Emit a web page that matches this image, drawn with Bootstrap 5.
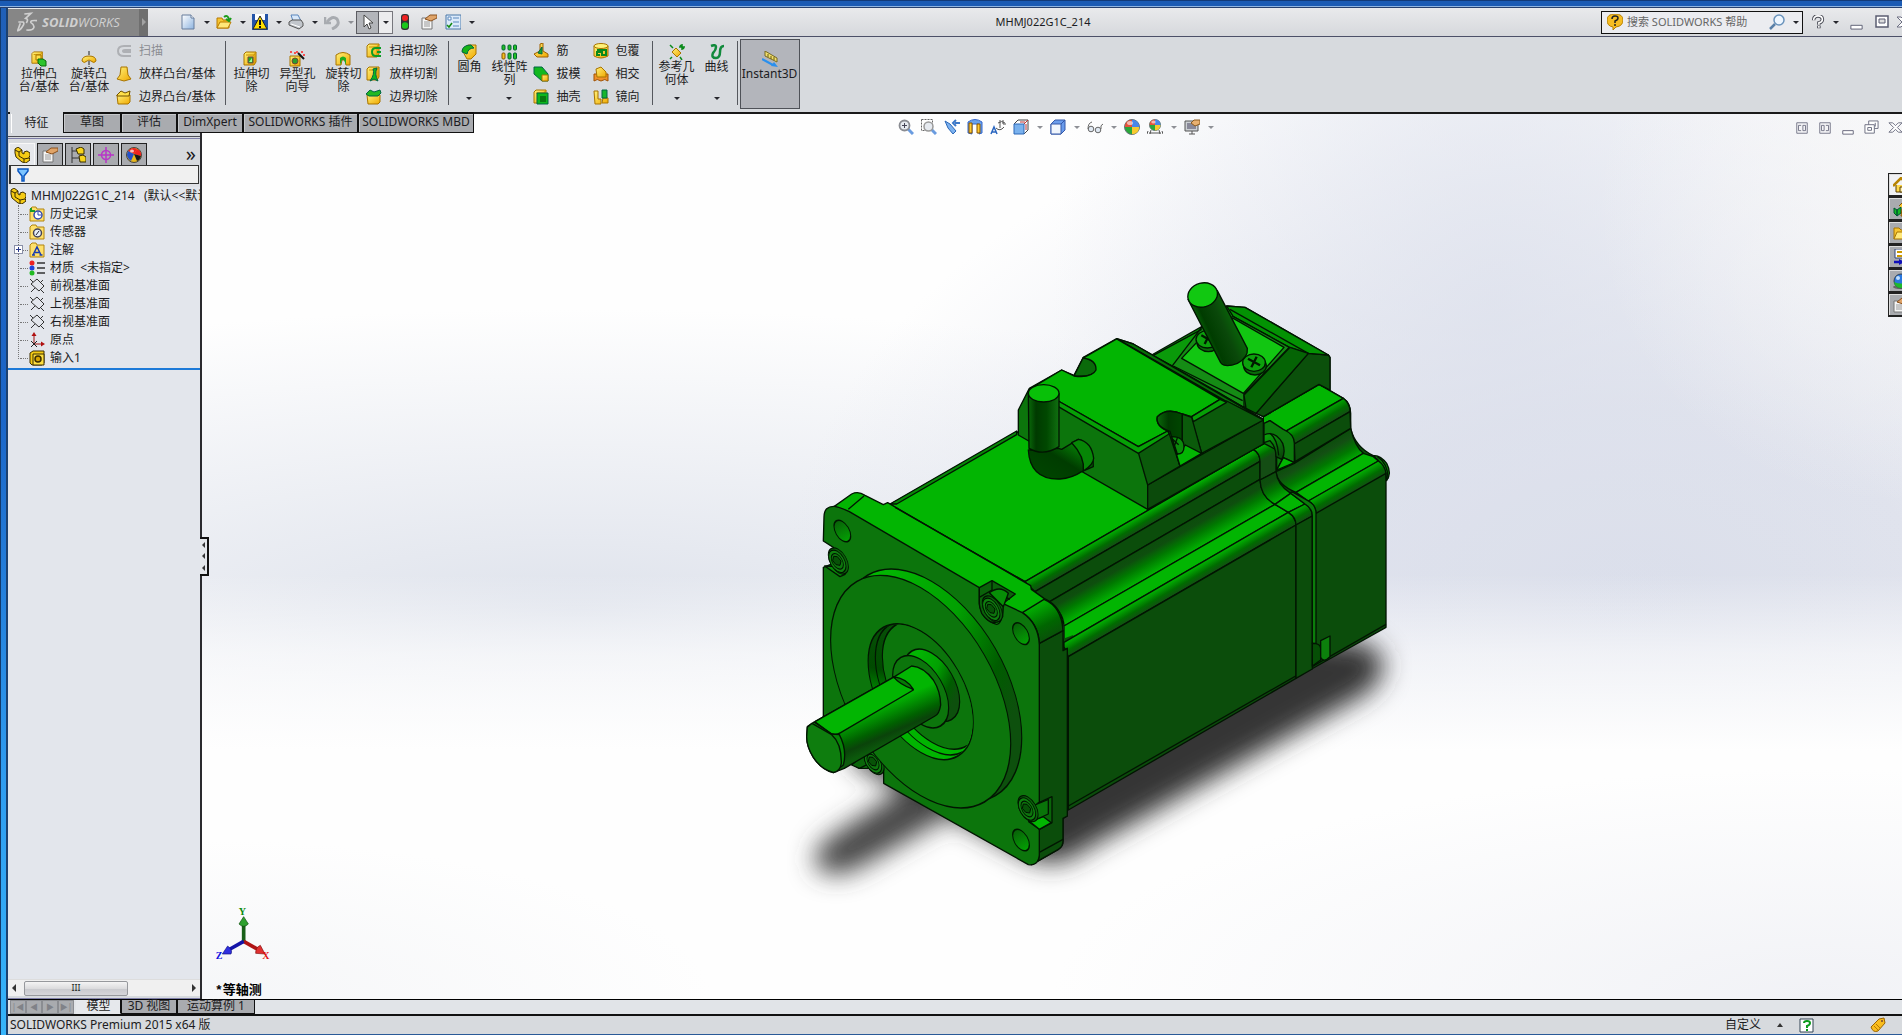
<!DOCTYPE html>
<html lang="zh-CN">
<head>
<meta charset="utf-8">
<meta name="viewport" content="width=device-width, initial-scale=1">
<title>SOLIDWORKS - MHMJ022G1C_214</title>
<link href="https://cdn.jsdelivr.net/npm/bootstrap@5.3.0/dist/css/bootstrap.min.css" rel="stylesheet">
<style>
:root{--ui:#d7dade;--ink:#1c1c22;--line:#111}
html,body{height:100%}
body{font-family:"Noto Sans","Noto Sans CJK SC",sans-serif;font-size:12px;line-height:16px;color:var(--ink);background:var(--ui);overflow:hidden}
button{border:0;background:none;padding:0;color:inherit;font:inherit;line-height:inherit}
svg{display:block;flex:none}
.ico{width:16px;height:16px}
.frame-top{height:8px;background:linear-gradient(#123a78 0 1px,#1b5bb4 1px 6px,#8fb4e0 6px 7px,#27406e 7px)}
.frame-left{width:8px;background:linear-gradient(90deg,#123a6c 0 1px,transparent 1px 6px,#1c4170 6px),linear-gradient(#2060b8,#1b66c8 40%,#2f9cf0 75%,#36b4fa)}
.caret-dn{width:0;height:0;border:3px solid transparent;border-top-color:#26262c;border-bottom:0;flex:none}
.caret-dim{border-top-color:#8e9096}
/* title bar */
.titlebar{height:29px;background:linear-gradient(#e9eaec,#d6d8dc);border-bottom:1px solid #4c5068;white-space:nowrap}
.brand-box{width:131px;height:27px;background:#868686;color:#d0d0d0;font:italic 400 13px/27px "Open Sans",sans-serif;padding-left:9px}
.brand-arrow{width:9px;height:27px;background:#6f6f6f}
.brand-arrow i{border:4px solid transparent;border-left-color:#a2a2a2;border-right:0}
.quick{padding-left:32px}
.quick .tool{width:36px}
.quick .tool-slim{width:32px}
.tool .caret-dn{margin-left:8px}
.pick{width:23px;height:23px;background:#b3b5ba;border:1px solid #5c5c62}
.pick-dd{width:14px;height:23px;background:#ececee;border:1px solid #77777d;border-left:0}
.doc-title{font-size:11px;padding-left:4px}
.search-box{width:202px;height:23px;border:1px solid #111;background:#ebecf0;padding:0 5px}
.search-box input{width:146px;border:0;background:none;font-size:11px;padding:0 4px;color:#555;outline:0}
.search-box input::placeholder{color:#666;opacity:1}
.win-ctl{width:99px;padding-left:8px;gap:6px}
/* ribbon */
.ribbon{height:77px;border-bottom:2px solid #1a1a1a;background:var(--ui);padding-left:6px}
.big{width:46px;line-height:13px;padding-top:14px;text-align:center;justify-content:flex-start}
.big-wide{width:50px}
.big-top{width:40px;padding-top:7px;position:relative}
.big-top .caret-dn{position:absolute;bottom:12px}
.stack{padding-top:2px}
.stack button{height:23px;display:flex;align-items:center;gap:7px}
.stack-a{padding-left:2px;padding-right:10px}
.divide{width:1px;background:#55585e;margin:4px 0 7px}
.instant{width:60px;height:70px;border:1px solid #4f5258;background:#b3b5bb;margin:2px 0 0 2px;padding-top:11px;line-height:13px}
.off{color:#8b8d92}
/* command tabs */
.cmd-tabs{position:absolute;left:2px;top:-2px;z-index:3}
.cmd-tabs button{height:21px;border:1px solid var(--line);border-width:2px 1px 1px;background:#a9abaf;padding:0 0 3px;line-height:15px;box-shadow:inset 1px 1px #c6c8cb}
.cmd-tabs button.active{background:var(--ui);border-color:var(--ui);height:22px;box-shadow:inset 1px 0 #fff}
/* feature manager */
.side{width:194px;padding-top:22px;background:var(--ui);border-right:2px solid #2a2a2e;position:relative;z-index:2}
.side-rule{border-top:1px solid #4e4e56;height:3px;border-bottom:1px solid #7f7fa8;margin-bottom:4px}
.mgr-tabs{height:22px;padding-left:1px}
.mgr-tabs button{width:26px;height:22px;margin-right:2px;background:#a9abaf;border:1px solid #222;border-bottom:0;display:flex;align-items:center;justify-content:center}
.mgr-tabs button.active{background:#e6e8ec;border-color:#f8f8f8}
.filter-box{height:19px;border:1px solid #333;border-width:1px 1px 1px 2px;background:#f0f0f0;margin:0 1px;padding-left:4px}
.filter-box input{border:0;background:none;width:150px;height:15px;outline:0}
.tree{background:#e3e6ec;border-top:3px solid #dfe1e6}
.tree ul{margin:0;padding:0;list-style:none}
.tree .nodes{position:relative;border-bottom:2px solid #1d7ad8;padding-bottom:1px}
.tree .nodes:before{content:"";position:absolute;left:10px;top:0;height:154px;border-left:1px dotted #777}
.tree li{height:18px;white-space:nowrap;overflow:hidden}
.tree .root{padding-left:2px;gap:5px}
.tree .leaf{padding-left:12px;gap:5px}
.tree .leaf:before{content:"";width:8px;border-top:1px dotted #777;margin-right:-4px}
.plus{position:absolute;left:6px;top:40px;width:9px;height:9px;border:1px solid #8a90a8;background:#fff;z-index:1}
.plus:before,.plus:after{content:"";position:absolute;background:#2a3a8a}
.plus:before{left:1px;right:1px;top:3px;height:1px}
.plus:after{top:1px;bottom:1px;left:3px;width:1px}
.hscroll{height:17px;background:#f0f0f0;border-top:1px solid #ddd}
.hscroll .thumb{width:104px;height:15px;border:1px solid #96989c;border-radius:2px;background:linear-gradient(#f4f4f4,#dcdcde 50%,#c8c9cd 52%,#d6d6da);font-size:9px;line-height:11px}
.tri{border:4px solid transparent;width:0;height:0}
.tri-l{border-right-color:#333;border-left:0}
.tri-r{border-left-color:#333;border-right:0}
.grip{position:absolute;right:-9px;top:423px;width:9px;height:39px;background:#e3e6ea;border:1px solid #111;border-width:2px 2px 2px 0}
.grip .tri{border-width:3px;border-left-width:0}
/* graphics area */
.view{position:relative;overflow:hidden;background:
 linear-gradient(to bottom,transparent 52%,rgba(254,254,254,.6) 61%,#fefefe 72%),
 radial-gradient(ellipse 18% 34% at 100% 10%,rgba(246,246,247,.9),transparent),
 radial-gradient(ellipse 26% 80% at 76% 22%,rgba(220,224,236,.7),transparent),
 radial-gradient(ellipse 50% 62% at 84% 55%,#dadeea,#e0e3ed 35%,transparent),
 radial-gradient(ellipse 70% 34% at 22% 56%,#dfe3ec,transparent),#fefefe}
.view:after{content:"";position:absolute;inset:0;background:radial-gradient(ellipse 45% 26% at 95% 100%,#f1f2f6,transparent),radial-gradient(ellipse 30% 18% at 0 100%,#f5f6f8,transparent);z-index:0}
.scene{position:absolute;inset:0;width:100%;height:100%;z-index:1}
.view-bar{position:absolute;z-index:2;top:5px;left:4px;right:-4px;gap:7px}
.doc-ctl{position:absolute;z-index:2;top:6px;right:0;width:107px;gap:9px}
.task-tabs{position:absolute;z-index:2;top:59px;right:0;width:14px}
.task-tabs button{width:14px;height:24px;border:1px solid #222;border-right:0;border-bottom-width:2px;background:#a9abaf;padding-left:4px;overflow:hidden;display:block;box-shadow:inset 1px 1px #ddd}
.task-tabs button.active{background:#f1f2f4}
.triad{position:absolute;left:11px;bottom:36px;z-index:2;width:60px;height:57px}
.orient{position:absolute;left:13px;bottom:0;z-index:2;font:700 13px/16px "Liberation Mono","Noto Sans CJK SC",monospace;color:#000}
/* bottom */
.model-tabs{height:17px;border-top:1px solid #000;border-bottom:2px solid #111;background:#e1e4e8;padding-left:2px}
.model-tabs .step{width:16px;height:14px;background:#a9abaf;border:1px solid #8b8d92;color:#808288;font-size:8px;line-height:12px;text-align:center}
.model-tabs .step:nth-child(4){margin-right:2px}
.model-tabs .sheet{height:14px;line-height:11px;background:#a9abaf;border:1px solid #111;border-top:0;padding-bottom:2px}
.model-tabs .sheet.active{background:#e6e8ec;border-color:#e6e8ec #111 #e6e8ec #e6e8ec}
.status{height:19px;background:var(--ui);border-bottom:1px solid #2a5a98;padding:0 0 0 2px}
</style>
</head>
<body class="d-flex flex-column">
<svg width="0" height="0" class="position-absolute">
<defs>
<linearGradient id="gy" x1="0" y1="0" x2="1" y2="1"><stop offset="0" stop-color="#fff27a"/><stop offset="1" stop-color="#f0a800"/></linearGradient>
<linearGradient id="gb" x1="0" y1="0" x2="1" y2="1"><stop offset="0" stop-color="#fff"/><stop offset="1" stop-color="#8eb4e0"/></linearGradient>
<symbol id="cube" viewBox="0 0 16 16"><path d="M1 3 3 1h10v10l-2 3H1z" fill="url(#gy)" stroke="#a87400"/><path d="M3 4h8v9M11 4l2-3" fill="none" stroke="#c89000"/></symbol>
<symbol id="i-ext" viewBox="0 0 16 16"><use href="#cube" width="14" height="14"/><path d="M5 4h5v5H5z" fill="#ffe04a" stroke="#a87400"/><path d="M7 8h5l3 2v5h-5l-3-3z" fill="#2cc42c" stroke="#0a6a0a"/></symbol>
<symbol id="i-rev" viewBox="0 0 16 16"><path d="M8 0v16" stroke="#222" stroke-dasharray="4 1"/><path d="M1 10Q1 5 8 5t7 5q-2 3-5 0-2-2-4 0-3 3-5 0z" fill="url(#gy)" stroke="#a87400"/></symbol>
<symbol id="i-sweepg" viewBox="0 0 16 16"><path d="M15 3H8Q2 3 2 8t6 5h7M15 7H9Q7 7 7 8t2 1h6" fill="none" stroke="#aeb0b4" stroke-width="2"/></symbol>
<symbol id="i-loft" viewBox="0 0 16 16"><path d="M5 1h6l1 8 3 4-7 2-7-2 3-4z" fill="url(#gy)" stroke="#a87400"/></symbol>
<symbol id="i-bound" viewBox="0 0 16 16"><path d="M1 6h13v7l-2 2H2z" fill="url(#gy)" stroke="#a87400"/><path d="M1 6l4-4 4 2 5-2-1 5-12 0z" fill="#ffe04a" stroke="#705000"/></symbol>
<symbol id="i-boundg" viewBox="0 0 16 16"><path d="M1 6h13v7l-2 2H2z" fill="url(#gy)" stroke="#a87400"/><path d="M0 5l4-4 4 2 6-2 1 3-3 3H3z" fill="#22b822" stroke="#064"/></symbol>
<symbol id="i-cut" viewBox="0 0 16 16"><use href="#cube" width="16" height="16"/><path d="M5 6h5v6H5z" fill="#22a822" stroke="#744"/><path d="M6 11l3-4v4z" fill="#9f9"/></symbol>
<symbol id="i-hole" viewBox="0 0 16 16"><path d="M1 5h10v10H1z" fill="url(#gy)" stroke="#a87400"/><circle cx="6" cy="10" r="3" fill="#2c9c2c" stroke="#743"/><path d="M9 2l6 6" stroke="#111" stroke-width="2"/><path d="M1 1h2M5 2h2M8 0v2M12 1h2M14 4h2" stroke="#f22" stroke-width="1.5"/></symbol>
<symbol id="i-revc" viewBox="0 0 16 16"><path d="M1 4q7-5 14 0v10h-4l-1-5H7l-1 5H1z" fill="url(#gy)" stroke="#a87400"/><path d="M5 14V7q3-3 6 0v7l-2-5H7z" fill="#1eae1e"/></symbol>
<symbol id="i-sweepc" viewBox="0 0 16 16"><use href="#cube" width="16" height="16"/><path d="M15 5H10q-4 0-4 4t4 4h5M15 9h-4" fill="none" stroke="#0c9c24" stroke-width="2"/></symbol>
<symbol id="i-loftc" viewBox="0 0 16 16"><use href="#cube" width="16" height="16"/><path d="M7 3q2 5-3 12l4-2 4 2Q8 8 11 2z" fill="#0cba1c" stroke="#064"/></symbol>
<symbol id="i-fillet" viewBox="0 0 16 16"><path d="M1 6l6-5h8v9l-5 5H6z" fill="url(#gy)" stroke="#a87400"/><path d="M1 8Q1 1 10 1l3 3q-6 0-7 6z" fill="#17b517" stroke="#064"/></symbol>
<symbol id="i-pat" viewBox="0 0 16 16"><g fill="#22c022" stroke="#063"><rect x="1" y="1" width="3" height="5" rx="1"/><rect x="7" y="1" width="3" height="5" rx="1"/><rect x="12.500" y="1" width="3" height="5" rx="1"/><rect x="1" y="9" width="3" height="6" rx="1" fill="#f3c020" stroke="#850"/><rect x="7" y="9" width="3" height="6" rx="1"/><rect x="12.500" y="9" width="3" height="6" rx="1"/></g></symbol>
<symbol id="i-rib" viewBox="0 0 16 16"><path d="M1 11l6-3V1l3-1v8l5 3v3H4z" fill="url(#gy)" stroke="#a06000"/><path d="M5 10l4-6v7z" fill="#1aae2a" stroke="#064"/></symbol>
<symbol id="i-draft" viewBox="0 0 16 16"><path d="M1 1l8 0 6 7v7H9L1 8z" fill="#12b81f" stroke="#064"/><path d="M9 9h6v6H9z" fill="url(#gy)" stroke="#a87400"/></symbol>
<symbol id="i-shell" viewBox="0 0 16 16"><use href="#cube" width="16" height="16"/><path d="M4 4h11v11H4z" fill="#0cb81c" stroke="#064"/><path d="M7 7h6v6H7z" fill="#087a12"/></symbol>
<symbol id="i-wrap" viewBox="0 0 16 16"><path d="M1 3v10q7 4 14 0V3" fill="url(#gy)" stroke="#a87400"/><ellipse cx="8" cy="3" rx="7" ry="2.500" fill="#fff27a" stroke="#a87400"/><path d="M4 7h3v2H4v3h3M9 7h4v5H9z" fill="none" stroke="#0a8a1a" stroke-width="2"/></symbol>
<symbol id="i-inter" viewBox="0 0 16 16"><path d="M1 8h14v7q-3-3-7 0-4-3-7 0z" fill="#f0902a" stroke="#a05000"/><path d="M3 3l5-2 5 5v5H4z" fill="url(#gy)" stroke="#a87400"/></symbol>
<symbol id="i-mir" viewBox="0 0 16 16"><path d="M1 2h4v8h3v5H2zM10 9h5v5H9z" fill="url(#gy)" stroke="#a87400"/><path d="M9 1h5v8H9z" fill="#17b52c" stroke="#064"/></symbol>
<symbol id="i-ref" viewBox="0 0 16 16"><path d="M7 4l5 5-4 4-5-5z" fill="url(#gy)" stroke="#a87400"/><path d="M1 1l3 3M10 3h6M13 0v6M11 1l4 4M11 13l2 3M3 13l-2 2" stroke="#0a8a1a" stroke-width="1.500"/></symbol>
<symbol id="i-curve" viewBox="0 0 16 16"><path d="M2 2q5-2 5 1T4 9q-2 5 3 5 4 0 4-6t4-6" fill="none" stroke="#128a3c" stroke-width="2.500"/></symbol>
<symbol id="i-3d" viewBox="0 0 16 16"><path d="M3 0l12 7v4L3 5z" fill="#f1de6c" stroke="#776a20"/><path d="M6 3v3M9 5v3M12 6v3" stroke="#665a10"/><path d="M0 8l11 6" stroke="#2a90ee" stroke-width="2"/><path d="M16 16l-7-1 3-4z" fill="#2a90ee"/></symbol>
<symbol id="i-new" viewBox="0 0 16 16"><path d="M2 1h9l3 3v11H2z" fill="url(#gb)" stroke="#667c9c"/><path d="M11 1v3h3" fill="#fff" stroke="#667c9c"/></symbol>
<symbol id="i-open" viewBox="0 0 16 16"><path d="M1 14V4h5l1 2h6v8z" fill="#f7c531" stroke="#b87a00"/><path d="M1 14l3-6h11l-3 6z" fill="#ffe87a" stroke="#b87a00"/><path d="M8 3q4-3 5 3M10 5l3 2 2-3" fill="none" stroke="#1a9c1a" stroke-width="2"/></symbol>
<symbol id="i-save" viewBox="0 0 16 16"><path d="M0 0h16v16H0z" fill="#2454a8"/><path d="M3 0h10v6H3z" fill="#fff"/><path d="M8 2l7 13H1z" fill="#ffe000" stroke="#222"/><path d="M8 6v5M8 12v2" stroke="#111" stroke-width="2"/></symbol>
<symbol id="i-print" viewBox="0 0 16 16"><path d="M3 1h7l3 6H5z" fill="#d8e8fa" stroke="#5a86bc"/><path d="M1 8l3-2h9l2 3v3l-4 3-10-4z" fill="#c2c6cc" stroke="#555"/><path d="M3 10l9 3" stroke="#fff"/></symbol>
<symbol id="i-undo" viewBox="0 0 16 16"><path d="M1 3v6h6" fill="none" stroke="#a8abb0" stroke-width="2.500"/><path d="M3 8q5-7 10-3 4 6-5 10" fill="none" stroke="#a8abb0" stroke-width="3"/></symbol>
<symbol id="i-arrow" viewBox="0 0 16 16"><path d="M4 1v12l3-3 2 5 2-1-2-5h4z" fill="#fff" stroke="#444"/></symbol>
<symbol id="i-light" viewBox="0 0 16 16"><rect x="4" y="0" width="8" height="16" rx="3" fill="#333"/><circle cx="8" cy="4" r="3" fill="#e22"/><circle cx="8" cy="11.500" r="3.200" fill="#1bc81b"/></symbol>
<symbol id="i-prop" viewBox="0 0 16 16"><path d="M1 4h10v11H1z" fill="#f5f5f5" stroke="#777"/><path d="M3 8h6M3 10h6M3 12h6" stroke="#999"/><path d="M4 5l5-4h7v3l-6 3-3-1z" fill="#e0a468" stroke="#8a5220"/></symbol>
<symbol id="i-opt" viewBox="0 0 16 16"><path d="M1 1h15v14H1z" fill="#dceafa" stroke="#4a78a8"/><path d="M3 3h3v3H3zM8 4h6M8 8h6M8 12h6" fill="#fff" stroke="#5a88bc"/><path d="M2 11l2 2 3-4" fill="none" stroke="#128a12" stroke-width="1.500"/></symbol>
<symbol id="i-tip" viewBox="0 0 16 16"><path d="M8 0q8 0 8 6t-7 7l-3 3v-3Q0 12 0 6t8-6z" fill="#f6bd22" stroke="#b88000"/><path d="M5 5q0-3 3-3t3 2q0 2-3 3v2M8 10v2" fill="none" stroke="#222" stroke-width="1.500"/></symbol>
<symbol id="i-find" viewBox="0 0 16 16"><path d="M1 15l5-5" stroke="#5a80a8" stroke-width="2.500"/><circle cx="10" cy="6" r="5" fill="#eef6ff" stroke="#6a93bc" stroke-width="1.500"/></symbol>
<symbol id="i-help" viewBox="0 0 16 16"><path d="M3 6q0-5 5-5t5 4q0 3-4 4v2M9 12v3" fill="none" stroke="#4c4e58" stroke-width="4"/><path d="M3 6q0-5 5-5t5 4q0 3-4 4v2M9 12.500v2" fill="none" stroke="#fff" stroke-width="1.800"/></symbol>
<symbol id="i-min" viewBox="0 0 16 16"><path d="M2 11h12v4H2z" fill="#fff" stroke="#5b5d72"/></symbol>
<symbol id="i-max" viewBox="0 0 16 16"><path d="M2 2h12v11H2z" fill="#fff" stroke="#5b5d72" stroke-width="1.500"/><path d="M5 5h6v4H5z" fill="#ddd" stroke="#5b5d72"/></symbol>
<symbol id="i-x" viewBox="0 0 16 16"><path d="M1 3h4l3 3 3-3h4l-5 5 5 5h-4l-3-3-3 3H1l5-5z" fill="#fff" stroke="#6b6d80"/></symbol>
<symbol id="i-part" viewBox="0 0 16 16"><path d="M1 2l3-2 4 3v3l2 1V5l3-1 3 2v3l-1 1 1 3-4 3-4-1-6-5-1-4z" fill="#f5cb14" stroke="#3c2e00"/><path d="M1 3l4 2v4l5 3 5-1M5 5l3-2M10 12v3" fill="none" stroke="#3c2e00"/></symbol>
<symbol id="i-conf" viewBox="0 0 16 16"><path d="M2 0v16M2 4h5M2 11h7" stroke="#333"/><path d="M6 2l5-2 3 2v5H8zM9 9l4-1 3 2v5h-6z" fill="#f7d41c" stroke="#332a00"/></symbol>
<symbol id="i-dim" viewBox="0 0 16 16"><g fill="none" stroke="#b836c8" stroke-width="1.500"><circle cx="8" cy="8" r="4.500"/><path d="M8 0v16M0 8h16"/></g></symbol>
<symbol id="i-ball" viewBox="0 0 16 16"><circle cx="8" cy="8" r="7.500" fill="#e8b81c" stroke="#444"/><path d="M8 7L2 4Q6-1 11 2z" fill="#e22"/><path d="M8 7l3-5q5 2 4 7z" fill="#e22"/><path d="M8 7L2 4Q-1 10 5 14z" fill="#2450c8"/><path d="M8 7l7 2q-1 4-4 5z" fill="#17181c"/><ellipse cx="6" cy="4" rx="2" ry="1.500" fill="#fff" opacity=".7"/></symbol>
<symbol id="i-ball2" viewBox="0 0 16 16"><circle cx="8" cy="8" r="7.500" fill="#2aa83a" stroke="#68707c"/><path d="M8 8V.8Q15 1 15.200 8z" fill="#4a86ea"/><path d="M8 8h7.200Q15 15 8 15.200z" fill="#f8ca30"/><path d="M8 8V.8Q1 1 .8 8z" fill="#e6533c"/><ellipse cx="6" cy="4" rx="3" ry="2" fill="#fff" opacity=".6"/></symbol>
<symbol id="i-globe" viewBox="0 0 16 16"><ellipse cx="8" cy="14" rx="8" ry="2" fill="#666"/><circle cx="8" cy="8" r="7" fill="#2a78e0" stroke="#345"/><path d="M1 9q7 3 14 0-1 6-7 6T1 9z" fill="#1fb82a"/><circle cx="5" cy="5" r="2" fill="#bfe0ff"/></symbol>
<symbol id="i-scene" viewBox="0 0 16 16"><use href="#i-ball2" x="2" width="12" height="12"/><path d="M1 12l-1 3M4 11l-1 4M12 11l1 4M15 12l1 3M2 14h12" stroke="#555"/></symbol>
<symbol id="i-funnel" viewBox="0 0 16 16"><path d="M3 2h10v2L9 9v5H7V9L3 4z" fill="#7cc4ff" stroke="#0a55c0" stroke-width="1.500"/></symbol>
<symbol id="folder" viewBox="0 0 16 16"><path d="M1 15V3l2-2h4l1 2h7v12z" fill="#ffe06a" stroke="#b08410"/></symbol>
<symbol id="i-hist" viewBox="0 0 16 16"><use href="#folder" width="16" height="16"/><circle cx="9" cy="9" r="4" fill="#fff" stroke="#3048b0" stroke-width="1.500"/><path d="M9 6v3h3" fill="none" stroke="#3048b0"/><path d="M2 2v3h4" fill="none" stroke="#1a9a2a" stroke-width="2"/></symbol>
<symbol id="i-sens" viewBox="0 0 16 16"><use href="#folder" width="16" height="16"/><circle cx="8.500" cy="9" r="4" fill="#e8f0f8" stroke="#445" stroke-width="1.500"/><path d="M7 11l3-4" stroke="#223"/></symbol>
<symbol id="i-note" viewBox="0 0 16 16"><use href="#folder" width="16" height="16"/><path d="M4 13L8 5l4 8M5 10.500h5.500M3 13h3M10.500 13h3" fill="none" stroke="#1a3cb0" stroke-width="1.500"/></symbol>
<symbol id="i-mat" viewBox="0 0 16 16"><circle cx="3" cy="3" r="2.500" fill="#e22"/><circle cx="3" cy="8" r="2.500" fill="#24d"/><circle cx="3" cy="13" r="2.500" fill="#2b2"/><path d="M8 3h8M8 8h8M8 13h8" stroke="#333" stroke-width="1.500"/></symbol>
<symbol id="i-plane" viewBox="0 0 16 16"><path d="M1 1l14 14M14 2L2 14" fill="none" stroke="#333"/><path d="M8 1l7 7-5 5-8-7z" fill="#e3e6ec" stroke="#333"/></symbol>
<symbol id="i-orig" viewBox="0 0 16 16"><path d="M5 12V2M5 12h9" stroke="#a01010"/><path d="M2.500 4L5 0l2.500 4zM12 9.500l4 2.500-4 2.500z" fill="#b01010"/><path d="M2 9l6 6M8 9l-6 6" stroke="#222"/></symbol>
<symbol id="i-imp" viewBox="0 0 16 16"><path d="M1 3l3-2h11v12l-2 2H3l-2-2z" fill="#f5cb14" stroke="#3c2e00"/><path d="M4 4h11v11H4z" fill="#ffe040" stroke="#3c2e00"/><circle cx="9" cy="9" r="3" fill="#d8a400" stroke="#3c2e00" stroke-width="1.500"/></symbol>
<symbol id="i-zoom" viewBox="0 0 16 16"><path d="M10 10l5 5" stroke="#6a9ce0" stroke-width="3"/><circle cx="6.500" cy="6.500" r="5" fill="#e6eaf0" stroke="#8a8c92" stroke-width="1.800"/><path d="M6.500 4v5M4 6.500h5" stroke="#445"/></symbol>
<symbol id="i-zooma" viewBox="0 0 16 16"><path d="M.5.500h11v11h-11z" fill="none" stroke="#666" stroke-dasharray="2 1"/><path d="M10 10l5 5" stroke="#6a9ce0" stroke-width="3"/><circle cx="7.500" cy="7.500" r="4.500" fill="#e6eaf0" stroke="#999" stroke-width="1.500"/></symbol>
<symbol id="i-prev" viewBox="0 0 16 16"><path d="M1 2l5 3 6 7-3 3-5-6z" fill="#7cb2f0" stroke="#2c68b8"/><path d="M16 4h-5M12 1L9 4l3 3" fill="none" stroke="#3c78c8" stroke-width="2"/></symbol>
<symbol id="i-sec" viewBox="0 0 16 16"><path d="M1 3q7-5 14 0v11l-3 1V5H5v10l-4-1z" fill="#6aa2ea" stroke="#36c"/><path d="M2 4h3v10H2zM10 5h3v9h-3z" fill="#fc3" stroke="#850"/></symbol>
<symbol id="i-ori" viewBox="0 0 16 16"><path d="M1 15L4 8l3 7M2 13h4" fill="none" stroke="#2a66c0" stroke-width="1.500"/><path d="M8 4q4-3 7 0M13 1v4h3M6 9q4 4 8-1M10 1v8" fill="none" stroke="#555"/></symbol>
<symbol id="i-vori" viewBox="0 0 16 16"><path d="M5 1h10v10l-4 4M1 5l4-4" fill="#fff" stroke="#444"/><path d="M1 5h10v10H1z" fill="#7ab2ee" stroke="#2c68b8"/><path d="M11 5l4-4M13 5v6M7 3h5" stroke="#b33"/></symbol>
<symbol id="i-disp" viewBox="0 0 16 16"><path d="M1 5l4-4h10v10l-4 4H1z" fill="#6a9cec" stroke="#3458a8"/><path d="M1 5h10v10H1z" fill="#f0f5fc" stroke="#3458a8"/><path d="M11 5l4-4" stroke="#3458a8"/></symbol>
<symbol id="i-glass" viewBox="0 0 16 16"><circle cx="4" cy="10" r="2.800" fill="#dfe8f2" stroke="#666"/><circle cx="11" cy="11" r="2.800" fill="#dfe8f2" stroke="#666"/><path d="M1 10Q1 4 5 3M14 10q-1-4 2-5" fill="none" stroke="#666"/></symbol>
<symbol id="i-vset" viewBox="0 0 16 16"><path d="M1 2h13v10H1zM5 15h6M8 12v3" fill="#ccd0d4" stroke="#555"/><path d="M3 4h9v6H3z" fill="#889"/><path d="M7 4l3-3h6v4l-5 2z" fill="#e8b070" stroke="#8a5a20"/></symbol>
<symbol id="i-pl" viewBox="0 0 16 16"><path d="M2 2h12v12H2z" fill="#f4f4f6" stroke="#6b6d80"/><path d="M9 5h3v6H9zM4 5v6M4 5h3M4 11h3" fill="none" stroke="#6b6d80"/></symbol>
<symbol id="i-pr" viewBox="0 0 16 16"><path d="M2 2h12v12H2z" fill="#f4f4f6" stroke="#6b6d80"/><path d="M4 5h3v6H4zM12 5v6M12 5H9M12 11H9" fill="none" stroke="#6b6d80"/></symbol>
<symbol id="i-rest" viewBox="0 0 16 16"><path d="M5 1h10v8H5z" fill="#fff" stroke="#6b6d80"/><path d="M1 5h10v9H1z" fill="#fff" stroke="#6b6d80"/><path d="M4 8h4v3H4zM12 3v4" fill="none" stroke="#6b6d80"/></symbol>
<symbol id="i-home" viewBox="0 0 16 16"><path d="M3 8v7h11V8" fill="#ffd94a" stroke="#5a3e00"/><path d="M0 9l8-8 8 8" fill="none" stroke="#b88400" stroke-width="2.500"/><path d="M7 10h4v5H7z" fill="#fff3b0" stroke="#5a3e00"/></symbol>
<symbol id="i-lib" viewBox="0 0 16 16"><path d="M1 7l3 2v6l-3-3zM4 9l4-3v6l-4 3z" fill="#16b826" stroke="#053"/><path d="M6 5l4-4v6M9 8h6v7H8z" fill="#fc3" stroke="#850"/></symbol>
<symbol id="i-fold" viewBox="0 0 16 16"><path d="M1 14V3h5l2 2h7" fill="#f7c531" stroke="#a87400"/><path d="M1 14l3-7h12l-2 7z" fill="#ffe87a" stroke="#a87400"/></symbol>
<symbol id="i-pal" viewBox="0 0 16 16"><path d="M2 0h14v9H2z" fill="#fff" stroke="#347"/><path d="M4 3h8M4 7h8" stroke="#c90" stroke-width="2"/><path d="M1 13h8" stroke="#11b" stroke-width="2.500"/><path d="M6 10l5 3-5 3z" fill="#11b"/></symbol>
<symbol id="i-tag" viewBox="0 0 16 16"><path d="M1 10l8-8 5-1 1 5-7 8q-5 2-7-4z" fill="#f9bd1e" stroke="#9a6400"/><circle cx="12" cy="4" r="1" fill="#743"/><path d="M4 9l4 4M6 7l4 4" stroke="#b87a00"/></symbol>
</defs>
</svg>

<div class="frame-top flex-shrink-0"></div>
<div class="d-flex flex-grow-1 overflow-hidden">
<div class="frame-left flex-shrink-0"></div>
<div class="d-flex flex-column flex-grow-1 overflow-hidden">

<header class="titlebar d-flex align-items-center flex-shrink-0">
  <div class="brand-box d-flex align-items-center">
    <svg width="21" height="20" viewBox="0 0 63 60" class="me-1" fill="none" stroke="#d0d0d0" stroke-width="5"><path d="M22 6l20-2-16 15q10 2 2 14M4 30h14q6 4-2 14Q8 56 2 56l8-22M60 26q-22-2-18 6 12 8 8 16-4 8-22 6"/></svg>
    <span><b>SOLID</b>WORKS</span>
  </div>
  <button class="brand-arrow d-flex align-items-center justify-content-center" aria-label="菜单"><i></i></button>
  <div class="quick d-flex align-items-center">
    <button class="tool d-flex align-items-center" aria-label="新建"><svg class="ico"><use href="#i-new"/></svg><i class="caret-dn"></i></button>
    <button class="tool d-flex align-items-center" aria-label="打开"><svg class="ico"><use href="#i-open"/></svg><i class="caret-dn"></i></button>
    <button class="tool d-flex align-items-center" aria-label="保存"><svg class="ico"><use href="#i-save"/></svg><i class="caret-dn"></i></button>
    <button class="tool d-flex align-items-center" aria-label="打印"><svg class="ico"><use href="#i-print"/></svg><i class="caret-dn"></i></button>
    <button class="tool tool-slim d-flex align-items-center" aria-label="撤销"><svg class="ico"><use href="#i-undo"/></svg><i class="caret-dn caret-dim"></i></button>
    <button class="pick d-flex align-items-center justify-content-center" aria-label="选择"><svg class="ico"><use href="#i-arrow"/></svg></button>
    <button class="pick-dd d-flex align-items-center justify-content-center" aria-label="选择选项"><i class="caret-dn"></i></button>
    <button class="ms-1" aria-label="重建"><svg class="ico"><use href="#i-light"/></svg></button>
    <button class="ms-2" aria-label="文件属性"><svg class="ico"><use href="#i-prop"/></svg></button>
    <button class="tool d-flex align-items-center ms-2" aria-label="选项"><svg class="ico"><use href="#i-opt"/></svg><i class="caret-dn"></i></button>
  </div>
  <div class="doc-title flex-grow-1 text-center">MHMJ022G1C_214</div>
  <div class="search-box d-flex align-items-center flex-shrink-0">
    <svg class="ico"><use href="#i-tip"/></svg>
    <input type="text" placeholder="搜索 SOLIDWORKS 帮助" aria-label="搜索 SOLIDWORKS 帮助">
    <svg class="ico"><use href="#i-find"/></svg><i class="caret-dn ms-2"></i>
  </div>
  <div class="win-ctl d-flex align-items-center flex-shrink-0 overflow-hidden">
    <button class="d-flex align-items-center flex-shrink-0" aria-label="帮助"><svg width="14" height="14"><use href="#i-help"/></svg><i class="caret-dn ms-2 me-1"></i></button>
    <button class="flex-shrink-0" aria-label="最小化"><svg width="15" height="15"><use href="#i-min"/></svg></button>
    <button class="flex-shrink-0 ms-1" aria-label="最大化"><svg width="16" height="16"><use href="#i-max"/></svg></button>
    <button class="flex-shrink-0" aria-label="关闭"><svg class="ico"><use href="#i-x"/></svg></button>
  </div>
</header>

<section class="ribbon d-flex flex-shrink-0" aria-label="特征工具">
  <button class="big big-wide d-flex flex-column align-items-center"><svg class="ico"><use href="#i-ext"/></svg><span>拉伸凸<br>台/基体</span></button>
  <button class="big big-wide d-flex flex-column align-items-center"><svg class="ico"><use href="#i-rev"/></svg><span>旋转凸<br>台/基体</span></button>
  <div class="stack stack-a">
    <button class="off" disabled><svg class="ico"><use href="#i-sweepg"/></svg>扫描</button>
    <button><svg class="ico"><use href="#i-loft"/></svg>放样凸台/基体</button>
    <button><svg class="ico"><use href="#i-bound"/></svg>边界凸台/基体</button>
  </div>
  <div class="divide"></div>
  <button class="big d-flex flex-column align-items-center" style="margin-left:2px"><svg class="ico"><use href="#i-cut"/></svg><span>拉伸切<br>除</span></button>
  <button class="big d-flex flex-column align-items-center"><svg class="ico"><use href="#i-hole"/></svg><span>异型孔<br>向导</span></button>
  <button class="big d-flex flex-column align-items-center"><svg class="ico"><use href="#i-revc"/></svg><span>旋转切<br>除</span></button>
  <div class="stack stack-b" style="padding-right:11px">
    <button><svg class="ico"><use href="#i-sweepc"/></svg>扫描切除</button>
    <button><svg class="ico"><use href="#i-loftc"/></svg>放样切割</button>
    <button><svg class="ico"><use href="#i-boundg"/></svg>边界切除</button>
  </div>
  <div class="divide"></div>
  <button class="big big-top d-flex flex-column align-items-center"><svg class="ico"><use href="#i-fillet"/></svg><span>圆角</span><i class="caret-dn"></i></button>
  <button class="big big-top d-flex flex-column align-items-center"><svg class="ico"><use href="#i-pat"/></svg><span>线性阵<br>列</span><i class="caret-dn"></i></button>
  <div class="stack ps-1 pe-2">
    <button><svg class="ico"><use href="#i-rib"/></svg>筋</button>
    <button><svg class="ico"><use href="#i-draft"/></svg>拔模</button>
    <button><svg class="ico"><use href="#i-shell"/></svg>抽壳</button>
  </div>
  <div class="stack ps-1 pe-2 me-1">
    <button><svg class="ico"><use href="#i-wrap"/></svg>包覆</button>
    <button><svg class="ico"><use href="#i-inter"/></svg>相交</button>
    <button><svg class="ico"><use href="#i-mir"/></svg>镜向</button>
  </div>
  <div class="divide"></div>
  <button class="big big-top d-flex flex-column align-items-center ms-1"><svg class="ico"><use href="#i-ref"/></svg><span>参考几<br>何体</span><i class="caret-dn"></i></button>
  <button class="big big-top d-flex flex-column align-items-center"><svg class="ico"><use href="#i-curve"/></svg><span>曲线</span><i class="caret-dn"></i></button>
  <div class="divide"></div>
  <button class="instant d-flex flex-column align-items-center"><svg class="ico"><use href="#i-3d"/></svg>Instant3D</button>
</section>

<main class="d-flex flex-grow-1 position-relative" style="min-height:0">
  <nav class="cmd-tabs d-flex" aria-label="命令管理器">
    <button class="active" style="width:53px">特征</button><button style="width:58px">草图</button><button style="width:56px">评估</button><button style="width:66px">DimXpert</button><button style="width:115px">SOLIDWORKS 插件</button><button style="width:116px">SOLIDWORKS MBD</button>
  </nav>
  <aside class="side d-flex flex-column flex-shrink-0">
    <div class="side-rule flex-shrink-0"></div>
    <div class="mgr-tabs d-flex align-items-center flex-shrink-0">
      <button class="active" aria-label="特征树"><svg class="ico"><use href="#i-part"/></svg></button>
      <button aria-label="属性"><svg class="ico"><use href="#i-prop"/></svg></button>
      <button aria-label="配置"><svg class="ico"><use href="#i-conf"/></svg></button>
      <button aria-label="尺寸专家"><svg class="ico"><use href="#i-dim"/></svg></button>
      <button aria-label="外观"><svg class="ico"><use href="#i-ball"/></svg></button>
      <span class="ms-auto me-1 fs-5 lh-1">»</span>
    </div>
    <div class="filter-box d-flex align-items-center flex-shrink-0"><svg class="ico"><use href="#i-funnel"/></svg><input type="text" aria-label="过滤"></div>
    <div class="tree flex-grow-1 overflow-hidden">
      <ul>
        <li class="root d-flex align-items-center"><svg class="ico"><use href="#i-part"/></svg><span>MHMJ022G1C_214&nbsp;&nbsp; (默认&lt;&lt;默认&gt;_显示状态 1&gt;)</span></li>
      </ul>
      <ul class="nodes">
        <li class="leaf d-flex align-items-center"><svg class="ico"><use href="#i-hist"/></svg>历史记录</li>
        <li class="leaf d-flex align-items-center"><svg class="ico"><use href="#i-sens"/></svg>传感器</li>
        <li class="leaf d-flex align-items-center"><i class="plus"></i><svg class="ico"><use href="#i-note"/></svg>注解</li>
        <li class="leaf d-flex align-items-center"><svg class="ico"><use href="#i-mat"/></svg>材质&nbsp; &lt;未指定&gt;</li>
        <li class="leaf d-flex align-items-center"><svg class="ico"><use href="#i-plane"/></svg>前视基准面</li>
        <li class="leaf d-flex align-items-center"><svg class="ico"><use href="#i-plane"/></svg>上视基准面</li>
        <li class="leaf d-flex align-items-center"><svg class="ico"><use href="#i-plane"/></svg>右视基准面</li>
        <li class="leaf d-flex align-items-center"><svg class="ico"><use href="#i-orig"/></svg>原点</li>
        <li class="leaf d-flex align-items-center"><svg class="ico"><use href="#i-imp"/></svg>输入1</li>
      </ul>
    </div>
    <div class="hscroll d-flex align-items-center flex-shrink-0 px-1">
      <i class="tri tri-l"></i><div class="thumb text-center ms-2">III</div><i class="tri tri-r ms-auto"></i>
    </div>
    <div class="side-rule flex-shrink-0 mb-0 border-top-0"></div>
    <div class="grip d-flex flex-column align-items-center justify-content-around"><i class="tri tri-l"></i><i class="tri tri-l"></i><i class="tri tri-l"></i></div>
  </aside>

  <section class="view flex-grow-1" aria-label="图形区域">
    <svg class="scene" viewBox="202 114 1700 885" preserveAspectRatio="xMidYMid meet">
      <defs>
        <filter id="soft" x="-20%" y="-20%" width="140%" height="140%"><feGaussianBlur stdDeviation="38"/></filter>
        <linearGradient id="cove" gradientUnits="userSpaceOnUse" x1="300" y1="356" x2="343" y2="431"><stop offset="0" stop-color="#0b4d0b"/><stop offset=".25" stop-color="#0e4e0e"/><stop offset=".55" stop-color="#007800"/><stop offset="1" stop-color="#02b502"/></linearGradient>
        <linearGradient id="cove2" gradientUnits="userSpaceOnUse" x1="840" y1="50" x2="885" y2="128"><stop offset="0" stop-color="#0b4d0b"/><stop offset=".25" stop-color="#134f13"/><stop offset=".6" stop-color="#007800"/><stop offset="1" stop-color="#02b502"/></linearGradient>
        <linearGradient id="roll" gradientUnits="userSpaceOnUse" x1="300" y1="505" x2="322" y2="543"><stop offset="0" stop-color="#02b502"/><stop offset=".6" stop-color="#006c00"/><stop offset="1" stop-color="#144d14"/></linearGradient>
        <linearGradient id="roll1" gradientUnits="userSpaceOnUse" x1="300" y1="255" x2="320" y2="290"><stop offset="0" stop-color="#02b502"/><stop offset=".6" stop-color="#006c00"/><stop offset="1" stop-color="#144d14"/></linearGradient>
        <linearGradient id="roll3" gradientUnits="userSpaceOnUse" x1="940" y1="430" x2="965" y2="473"><stop offset="0" stop-color="#02b502"/><stop offset=".6" stop-color="#006c00"/><stop offset="1" stop-color="#144d14"/></linearGradient>
        <linearGradient id="rollr" gradientUnits="userSpaceOnUse" x1="905" y1="155" x2="928" y2="195"><stop offset="0" stop-color="#02b502"/><stop offset=".6" stop-color="#006c00"/><stop offset="1" stop-color="#144d14"/></linearGradient>
        <linearGradient id="shaft" gradientUnits="userSpaceOnUse" x1="255" y1="745" x2="300" y2="850"><stop offset="0" stop-color="#02b502"/><stop offset=".55" stop-color="#006000"/><stop offset=".75" stop-color="#0a430a"/><stop offset="1" stop-color="#0c5a0c"/></linearGradient>
        <linearGradient id="corner" gradientUnits="userSpaceOnUse" x1="735" y1="430" x2="790" y2="535"><stop offset="0" stop-color="#02b502"/><stop offset=".6" stop-color="#006600"/><stop offset="1" stop-color="#0b4d0b"/></linearGradient>
        <linearGradient id="rim" x1="0.3" y1="0" x2="1" y2=".3"><stop offset="0" stop-color="#02b502"/><stop offset=".45" stop-color="#02a002"/><stop offset=".8" stop-color="#005c00"/><stop offset="1" stop-color="#0d500d"/></linearGradient>
        <linearGradient id="recess" x1="0" y1="0" x2=".3" y2="1"><stop offset="0" stop-color="#0a520a"/><stop offset=".5" stop-color="#004a00"/><stop offset=".8" stop-color="#01b401"/></linearGradient>
        <linearGradient id="tube" x1="0" x2="1"><stop offset="0" stop-color="#0a6a0a"/><stop offset=".25" stop-color="#003a00"/><stop offset=".6" stop-color="#004800"/><stop offset="1" stop-color="#117011"/></linearGradient>
        <linearGradient id="tube2" gradientUnits="userSpaceOnUse" x1="600" y1="200" x2="700" y2="155"><stop offset="0" stop-color="#0b7a0b"/><stop offset=".3" stop-color="#003c00"/><stop offset=".7" stop-color="#0a480a"/><stop offset="1" stop-color="#0a600a"/></linearGradient>
        <linearGradient id="elbow" x1="0" y1="1" x2="1" y2="0"><stop offset="0" stop-color="#004800"/><stop offset=".5" stop-color="#003c00"/><stop offset="1" stop-color="#0aa80a"/></linearGradient>
        <linearGradient id="collar" x1="0" y1="0" x2=".6" y2="1"><stop offset="0" stop-color="#0aa80a"/><stop offset="1" stop-color="#0a4a0a"/></linearGradient>
        <linearGradient id="pit" x1="0" y1="0" x2="1" y2="1"><stop offset="0" stop-color="#0a520a"/><stop offset="1" stop-color="#02b002"/></linearGradient>
        <g id="hexbolt" stroke="#001200" stroke-width="3"><circle r="35" fill="#0a620a" transform="matrix(.866 .5 0 1 0 0)"/><circle r="30" fill="#0f7f0f" transform="matrix(.866 .5 0 1 -3 1)"/><circle r="21" fill="#0d740d" transform="matrix(.866 .5 0 1 -3 1)"/><path d="M-14 -14l11 1 11 13-3 13-12-2-10-12z" fill="#075207"/></g>
        <g id="philips" stroke="#001800" stroke-width="4"><ellipse cx="3" cy="10" rx="34" ry="27" fill="#0a6a0a"/><ellipse rx="34" ry="26" fill="#0da00d"/><path d="M-18-12L18 8M-8 14L8-18" fill="none" stroke-width="7"/></g>
        <g id="borehole"><circle r="29" transform="matrix(.866 .5 0 1 0 0)" fill="url(#pit)" stroke="#001800" stroke-width="4"/></g>
      </defs>
      <g transform="translate(1040 430) scale(.333333)" stroke="#021502" stroke-width="4" stroke-linejoin="round">
        <!-- ground shadow -->
        <g filter="url(#soft)" stroke="none" fill="#363636"><path d="M-60 1100L780 620 980 640Q1080 700 980 790L150 1250Q60 1320-20 1290L-560 1000-560 930z"/><path d="M-400 1070L-260 1150-520 1300Q-620 1360-670 1310-690 1260-620 1215z" fill="#444"/></g>

        <!-- rear housing -->
        <path d="M640 50L837-137 910-95Q932-80 932-50L932-5Q945 50 1000 77L1020 90Q1040 110 1038 130L1038 583 1038 592 815 717 700 600z" fill="#0b4d0b"/>
        <path d="M1000 77Q1020 74 1040 100 1056 130 1040 152L1038 130Q1030 100 1000 77z" fill="#0a8a0a"/>
        <path d="M1012 80Q1044 100 1044 146" fill="none"/>
        <path d="M708 125L763 100 932-5Q945 50 970 70L768 187Q712 165 708 125z" fill="url(#cove2)"/>
        <path d="M768 187L970 70 1000 80 1015 93 805 213z" fill="#02b502"/>
        <path d="M805 213L1015 93Q1034 105 1038 130L828 250Q826 225 805 213z" fill="url(#rollr)"/>
        <!-- main body -->
        <path d="M-450 224L-70 6 330 30 640 58 323 242-45 455z" fill="#02b502"/>
        <path d="M-450 222L-70 3-70 14-430 222z" fill="#088a08"/>
        <path d="M-45 455L640 58Q660 70 660 94L-15 485z" fill="url(#roll1)"/>
        <path d="M-15 485L660 94 660 148 20 520z" fill="#0b4d0b"/>
        <path d="M20 520L660 148Q662 200 705 223L72 588Q70 540 20 520z" fill="url(#cove)"/>
        <path d="M72 588L705 223 745 247 72 637z" fill="#02b502"/>
        <path d="M60 630L100 615V700H60z" fill="#0b4d0b" stroke="none"/>
        <path d="M72 637L745 247Q768 262 768 285L85 680 72 650z" fill="url(#roll)"/>
        <path d="M85 680L768 285 768 745 85 1140z" fill="#0b4d0b"/>
        <path d="M85 1128L1038 583" fill="none"/>
        <!-- end ring -->
        <path d="M640 58L690 32Q708 45 708 75L708 125 660 150 660 94Q660 70 640 58z" fill="url(#roll1)"/>
        <path d="M660 150L708 125Q712 165 752 190L705 223Q662 200 660 150z" fill="url(#cove)"/>
        <path d="M705 223L752 190 795 222 745 247z" fill="#02b502"/>
        <path d="M745 247L795 222Q817 235 817 258L768 285Q768 262 745 247z" fill="url(#roll)"/>
        <path d="M768 285L817 258 817 717 768 745z" fill="#0b4d0b"/>
        <path d="M752 190Q752 182 765 190L805 213Q828 225 828 250L828 640 817 640 817 258Q817 235 795 222z" fill="#0b7d0b"/>
        <path d="M817 640Q842 640 842 655L842 690 817 708z" fill="#064e06"/><path d="M842 632L870 618 870 680Q850 700 842 682z" fill="#0c800c"/>

        <g transform="translate(-120 -480)">
          <!-- rear top step -->
          <path d="M790 440L957 343 1030 385 850 488 810 452 790 462z" fill="#02b502"/>
          <path d="M1030 385Q1050 400 1050 425L883 522Q882 500 850 488z" fill="url(#roll3)"/>
          <path d="M1050 425L1052 475 885 575 883 522z" fill="#0b4d0b"/>
          <path d="M792 460L810 452 850 478Q883 492 883 520L883 578 850 563 830 600 830 540 792 520z" fill="#0c780c"/>
          <path d="M830 600L850 563 883 578z" fill="#02b502"/>
          <path d="M792 495Q825 480 848 520 858 550 845 568L828 560Q828 530 810 512L792 518z" fill="url(#collar)"/>
          <path d="M810 490Q832 505 836 556" fill="none"/>
          <!-- encoder connector -->
          <path d="M455 255L605 170 680 108 735 112 985 255 990 262 990 360 957 343 790 440 735 412 520 290z" fill="#0a9a0a"/>
          <path d="M925 250L985 255 990 262 990 360 957 343 790 440 768 430z" fill="#0b500b"/>
          <path d="M680 108L735 112 985 255 925 250 868 232 700 140z" fill="#039203"/>
          <path d="M690 118L925 250" fill="none"/>
          <path d="M605 172L700 140 868 232 732 372 732 412 515 290z" fill="#158c15"/>
          <path d="M520 288L728 392M460 256L605 178" fill="none"/>
          <path d="M545 265L625 180 700 145 852 232 730 370z" fill="#12c612"/>
          <path d="M732 375L870 232 925 250 768 430 738 415z" fill="#056405"/>
          <use href="#philips" x="622" y="208"/>
          <path d="M564 88L652 62 742 235Q745 262 712 280 675 295 662 278z" fill="url(#tube2)"/>
          <ellipse cx="608" cy="75" rx="45" ry="36" fill="#11c811" transform="rotate(-15 608 75)"/>
          <use href="#philips" x="762" y="278"/>
          <!-- power connector box -->
          <path d="M350 206L400 222 660 370 790 448 790 522 443 718 55 495 55 420 88 355 185 300 222 316 250 262z" fill="#0c750c"/>
          <path d="M350 206L400 222 790 448 680 395z" fill="#077007"/>
          <path d="M360 214L690 404" fill="none"/>
          <path d="M443 645L790 450 790 522 443 718z" fill="#0b4a0b"/>
          <path d="M415 548L505 483 540 588 443 645z" fill="#0b5a0b"/>
          <path d="M575 450L680 393 790 450 605 550z" fill="#0b5a0b"/>
          <path d="M222 318L250 262Q290 270 290 300 280 322 222 318z" fill="#0a6a0a"/>
          <path d="M90 357L185 300 222 318Q275 325 288 300 290 270 250 264L350 207 660 388 575 440 547 432Q500 412 472 440 466 468 503 483L415 530 175 393z" fill="#02b502"/>
          <path d="M175 393L415 530 503 483 507 492 415 550 175 410z" fill="#06a006"/>
          <path d="M575 440L660 388 680 397 580 455z" fill="#06a006"/>
          <path d="M472 440Q500 412 547 432L547 530 605 550 540 588 510 484Q466 470 472 440z" fill="url(#tube)"/>
          <path d="M547 432L575 442 605 550 547 530z" fill="#0b5a0b"/>
          <path d="M530 555L556 525 605 550 540 588z" fill="#02b502"/>
          <path d="M515 500Q552 500 552 530 552 552 532 552z" fill="#0b8a0b"/><path d="M518 508L536 524M532 504L524 526" fill="none"/>
          <!-- power cable -->
          <path d="M85 540Q90 630 180 627 215 625 245 605L280 590Q280 520 235 508L185 538 175 535z" fill="url(#elbow)"/>
          <path d="M215 518L235 508Q275 515 281 565 280 585 250 603 255 560 215 518z" fill="#068606"/>
          <path d="M85 370L177 370 177 530Q130 560 87 535z" fill="url(#tube)"/>
          <ellipse cx="131" cy="370" rx="46" ry="26" fill="#08c008"/>
        </g>

        <!-- front flange -->
        <g transform="translate(-750 90)">
          <path d="M133 139L185 102Q205 92 225 106L280 134 293 128 722 377 724 388 762 415Q815 440 819 495L819 572 832 565 832 1068 819 1075 819 1140Q820 1160 805 1168L725 1214 600 900z" fill="#02b502"/>
          <path d="M748 550L819 512 819 572 832 565 832 1068 819 1075 819 1140Q820 1160 805 1168L725 1214Q748 1205 748 1185z" fill="#0b4d0b"/>
          <path d="M697 458L762 418Q815 440 819 512L748 550Q745 490 697 458z" fill="url(#corner)"/>
          <path d="M748 1177L819 1138M175 148L222 108M315 142L705 365" fill="none"/>
          <path d="M100 243L102 170Q103 138 133 139 150 141 178 155L568 383 568 430Q575 480 620 493 640 490 638 430L697 458Q745 490 748 555L748 1185Q745 1218 715 1214L281 970 281 925 208 925 100 860 100 322 130 310 130 262z" fill="#0c750c"/>
          <path d="M568 383L606 362 676 402 640 430 638 470Q610 510 575 460 568 440 568 430z" fill="#0a620a"/>
          <path d="M606 362V390L568 412M606 390L660 418" fill="none"/>
          <path d="M598 398Q630 375 655 400L640 440z" fill="#078f07"/>
          <use href="#hexbolt" x="607" y="447"/>
          <path d="M742 1030L786 1010 786 1088 748 1108 716 1085z" fill="#0a650a"/><path d="M720 1085L760 1070 784 1088 748 1108z" fill="#02b502"/>
          <path d="M735 1035L775 1018V1062L735 1080z" fill="#097409"/>
          <use href="#hexbolt" x="714" y="1046"/>
          <path d="M104 318L150 350 165 343 172 320z" fill="#088a08"/>
          <use href="#hexbolt" x="145" y="303"/>
          <path d="M185 915L208 925 240 910 225 880z" fill="#0a650a"/>
          <use href="#hexbolt" x="252" y="905"/>
          <use href="#borehole" x="157" y="213"/><use href="#borehole" x="693" y="521"/><use href="#borehole" x="693" y="1140"/>
          <circle r="312" transform="matrix(.866 .5 0 1 425 676)" fill="url(#rim)"/>
          <circle r="312" transform="matrix(.866 .5 0 1 392 695)" fill="#0c750c"/>
          <circle r="182" transform="matrix(.866 .5 0 1 392 695)" fill="url(#recess)"/>
          <clipPath id="well"><circle r="180" transform="matrix(.866 .5 0 1 392 695)"/></clipPath>
          <g clip-path="url(#well)"><circle r="180" transform="matrix(.866 .5 0 1 412 683)" fill="none"/><circle r="172" transform="matrix(.866 .5 0 1 426 675)" fill="#0c750c"/></g>
          <circle r="97" transform="matrix(.866 .5 0 1 425 676)" fill="url(#rim)"/>
          <circle r="97" transform="matrix(.866 .5 0 1 392 695)" fill="#0c750c"/>
          <path d="M75 785L310 652 365 618Q400 620 430 660 452 695 452 735 448 762 435 768L163 925 130 938z" fill="url(#shaft)"/>
          <path d="M75 785L310 652Q345 660 370 690L152 818Q140 826 125 822z" fill="#02b502"/>
          <path d="M310 650Q350 655 370 688 330 675 310 650z" fill="#067a06"/>
          <path d="M52 800L72 786 125 822 148 824Q172 870 160 915L130 938Q95 930 70 892 50 860 50 830z" fill="#068206"/>
          <path d="M52 802L66 790 125 824Q155 850 154 910 150 935 130 937 95 930 70 892 50 860 50 830z" fill="#0e7d0e"/>
        </g>
      </g>
    </svg>

    <div class="view-bar d-flex align-items-center justify-content-center" role="toolbar" aria-label="视图">
      <button aria-label="整屏显示全图"><svg class="ico"><use href="#i-zoom"/></svg></button>
      <button aria-label="局部放大"><svg class="ico"><use href="#i-zooma"/></svg></button>
      <button aria-label="上一视图"><svg class="ico"><use href="#i-prev"/></svg></button>
      <button aria-label="剖面视图"><svg class="ico"><use href="#i-sec"/></svg></button>
      <button aria-label="动态注解"><svg class="ico"><use href="#i-ori"/></svg></button>
      <button class="d-flex align-items-center gap-2" aria-label="视图定向"><svg class="ico"><use href="#i-vori"/></svg><i class="caret-dn caret-dim"></i></button>
      <button class="d-flex align-items-center gap-2" aria-label="显示样式"><svg class="ico"><use href="#i-disp"/></svg><i class="caret-dn caret-dim"></i></button>
      <button class="d-flex align-items-center gap-2" aria-label="隐藏/显示"><svg class="ico"><use href="#i-glass"/></svg><i class="caret-dn caret-dim"></i></button>
      <button aria-label="编辑外观"><svg class="ico"><use href="#i-ball2"/></svg></button>
      <button class="d-flex align-items-center gap-2" aria-label="应用布景"><svg class="ico"><use href="#i-scene"/></svg><i class="caret-dn caret-dim"></i></button>
      <button class="d-flex align-items-center gap-2" aria-label="视图设定"><svg class="ico"><use href="#i-vset"/></svg><i class="caret-dn caret-dim"></i></button>
    </div>
    <div class="doc-ctl d-flex align-items-center overflow-hidden">
      <button class="flex-shrink-0" aria-label="左窗格"><svg width="14" height="14"><use href="#i-pl"/></svg></button>
      <button class="flex-shrink-0" aria-label="右窗格"><svg width="14" height="14"><use href="#i-pr"/></svg></button>
      <button class="flex-shrink-0" aria-label="最小化文档"><svg width="14" height="14"><use href="#i-min"/></svg></button>
      <button class="flex-shrink-0" aria-label="还原文档"><svg width="15" height="15"><use href="#i-rest"/></svg></button>
      <button class="flex-shrink-0" aria-label="关闭文档"><svg width="15" height="15"><use href="#i-x"/></svg></button>
    </div>
    <div class="task-tabs">
      <button class="active" aria-label="资源"><svg class="ico"><use href="#i-home"/></svg></button>
      <button aria-label="设计库"><svg class="ico"><use href="#i-lib"/></svg></button>
      <button aria-label="文件探索器"><svg class="ico"><use href="#i-fold"/></svg></button>
      <button aria-label="视图调色板"><svg class="ico"><use href="#i-pal"/></svg></button>
      <button aria-label="外观"><svg class="ico"><use href="#i-globe"/></svg></button>
      <button aria-label="自定义属性"><svg class="ico"><use href="#i-prop"/></svg></button>
    </div>
    <svg class="triad" viewBox="640 80 180 171">
      <path d="M732 188V135" stroke="#186018" stroke-width="11"/><path d="M732 112l-14 22q14 14 28 0z" fill="#2ea02e" stroke="#0b4d0b" stroke-width="2"/>
      <path d="M732 186l46 26" stroke="#b01414" stroke-width="11"/><path d="M796 224l-28-2q0-18 14-24z" fill="#e03030" stroke="#801010" stroke-width="2"/>
      <path d="M732 186l-46 26" stroke="#1414a8" stroke-width="11"/><path d="M668 224l26 0q6-12-10-24z" fill="#3030e0" stroke="#101080" stroke-width="2"/>
      <g font-family="Liberation Serif, serif" font-weight="700" font-size="30" text-anchor="middle"><text x="728" y="108" fill="#0a8a0a">Y</text><text x="799" y="240" fill="#e01010">X</text><text x="658" y="240" fill="#1010e0">Z</text></g>
    </svg>
    <div class="orient">*等轴测</div>
  </section>
</main>

<nav class="model-tabs d-flex flex-shrink-0" aria-label="模型标签">
  <button class="step" aria-label="首页">|◀</button><button class="step" aria-label="上一页">◀</button><button class="step" aria-label="下一页">▶</button><button class="step" aria-label="末页">▶|</button>
  <button class="sheet active" style="width:45px">模型</button><button class="sheet" style="width:56px">3D 视图</button><button class="sheet" style="width:78px">运动算例 1</button>
</nav>
<footer class="status d-flex align-items-center flex-shrink-0">
  <span class="flex-grow-1">SOLIDWORKS Premium 2015 x64 版</span>
  <button class="d-flex align-items-center">自定义<svg width="6" height="4" class="mx-3"><path d="M0 4l3-4 3 4z" fill="#333"/></svg></button>
  <button class="me-5" aria-label="帮助"><svg width="15" height="15" viewBox="0 0 15 15"><path d="M1 1h13v13H1z" fill="#fff" stroke="#345"/><path d="M5 5q0-2 3-2t3 2-3 3v2M8 11v2" fill="none" stroke="#0a9a1a" stroke-width="2"/></svg></button>
  <button class="ms-2 me-3" aria-label="标签"><svg class="ico"><use href="#i-tag"/></svg></button>
</footer>
</div>
</div>
<script src="https://cdn.jsdelivr.net/npm/bootstrap@5.3.0/dist/js/bootstrap.bundle.min.js"></script>
</body>
</html>
